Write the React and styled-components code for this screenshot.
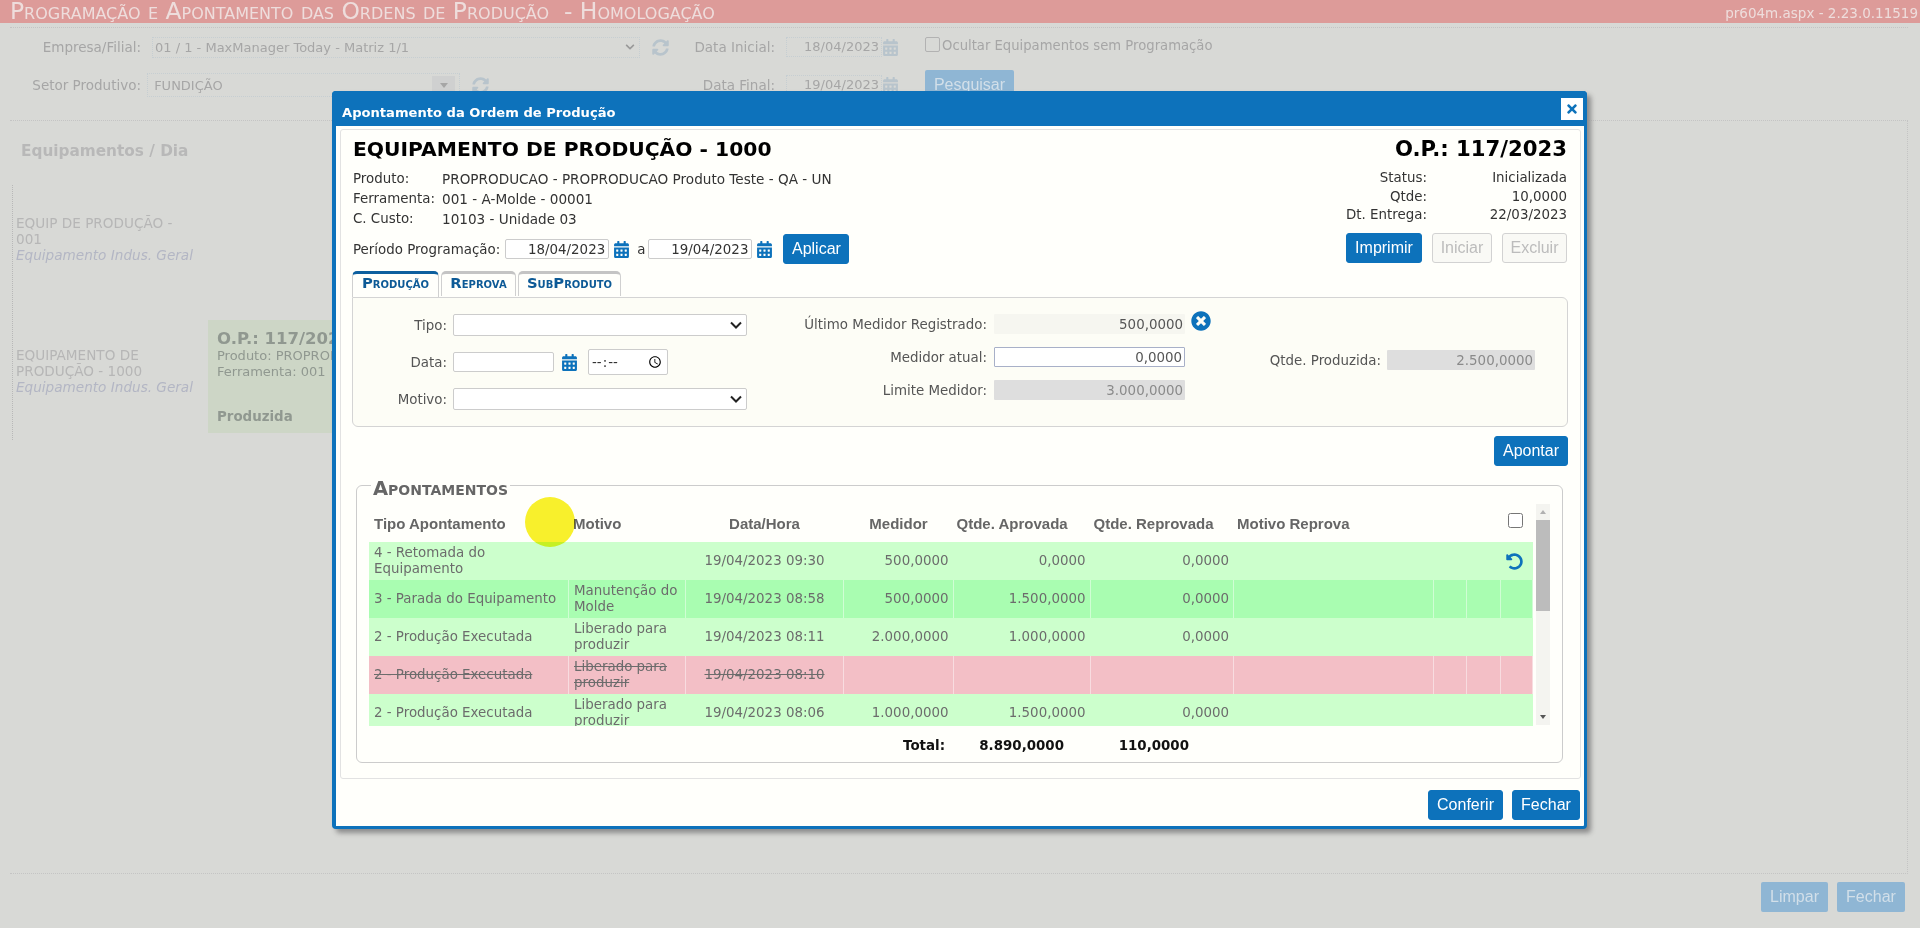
import React from "react";
import styled, { createGlobalStyle } from "styled-components";
import { FaCalendarAlt, FaChevronDown, FaSyncAlt, FaTimes, FaTimesCircle, FaUndoAlt } from "react-icons/fa";

const GlobalStyle = createGlobalStyle`
  html, body {
    margin: 0;
    height: 928px;
    overflow: hidden;
    background: #d8d9d6;
    font-family: "DejaVu Sans", Verdana, sans-serif;
    font-size: 13.4px;
  }
  * { box-sizing: border-box; }
`;

const Page = styled.div`
  position: relative;
  display: flex;
  flex-direction: column;
  width: 1920px;
  height: 928px;
  overflow: hidden;
`;

/* tela de fundo, atras do modal */
const TopBar = styled.div`
  display: flex;
  justify-content: space-between;
  align-items: center;
  flex: none;
  height: 23px;
  padding: 0 2px 0 10px;
  background: #dd9b99;
  color: #eedddc;
`;

const PageTitle = styled.div`
  font-variant: small-caps;
  font-size: 23.4px;
  line-height: 23px;
`;

const Version = styled.div`
  font-size: 13.5px;
  padding-top: 2px;
`;

const FilterBox = styled.div`
  display: grid;
  flex: none;
  grid-template-columns: 131px 534px 100px 107px 43px 1fr;
  grid-template-rows: 38px 38px;
  align-items: center;
  height: 93px;
  margin: 4px 12px 0 10px;
  border-top: 1px dotted #c4c4c4;
  color: #a6a6a6;
  font-size: 13.5px;
`;

const FilterLabel = styled.div`
  text-align: right;
`;

const FilterControl = styled.div`
  display: flex;
  align-items: center;
  color: #b8c4cc;
  font-size: 17px;
`;

const BackSelect = styled.div`
  display: flex;
  justify-content: space-between;
  align-items: center;
  width: ${(p) => p.$width}px;
  height: ${(p) => p.$height}px;
  margin: 0 12px 0 ${(p) => p.$left}px;
  padding: 0 4px 0 2px;
  border: 1px dotted #c6ced2;
  color: #a6a6a6;
  font-size: 13px;

  svg {
    color: #999;
    font-size: 10px;
  }
`;

const BackDropdown = styled.span`
  display: flex;
  justify-content: center;
  align-items: center;
  width: 23px;
  height: 19px;
  background: #cfd0d0;

  &::after {
    content: "";
    border-left: 4px solid transparent;
    border-right: 4px solid transparent;
    border-top: 5px solid #a6a6a6;
  }
`;

const BackInput = styled.div`
  width: 96px;
  height: 20px;
  margin-left: 11px;
  padding-right: 2px;
  border: 1px dotted #c6ced2;
  color: #a6a6a6;
  text-align: right;
  line-height: 18px;
  font-size: 13px;
`;

const BackCheck = styled.span`
  display: inline-block;
  width: 15px;
  height: 15px;
  margin-right: 2px;
  border: 1px solid #b2b2b2;
  border-radius: 2px;
  vertical-align: -2px;
`;

const BackOption = styled.div`
  margin-top: -4px;
  font-size: 13.2px;
`;

const BackButton = styled.div`
  display: flex;
  justify-content: center;
  align-items: center;
  width: ${(p) => p.$width}px;
  height: 30px;
  border-radius: 2px;
  background: #8fb6d4;
  color: #d2dfe9;
  font-family: "Liberation Sans", Arial, sans-serif;
  font-size: 16px;
`;

const MainPanel = styled.div`
  flex: 1;
  margin: 0 12px 0 10px;
  padding-left: 2px;
  border-top: 1px dotted #c4c4c4;
  border-bottom: 1px dotted #c4c4c4;
  border-right: 1px dotted #c4c4c4;
  color: #b2b2b2;
`;

const PanelHeading = styled.div`
  height: 64px;
  padding: 20px 0 0 9px;
  font-size: 15.3px;
  font-weight: 700;
  line-height: 20px;
  color: #b8b8b8;
`;

const EquipList = styled.div`
  height: 255px;
  border-left: 1px dotted #b8b8b8;
`;

const EquipRow = styled.div`
  display: flex;
  height: ${(p) => p.$height}px;
`;

const EquipName = styled.div`
  width: 195px;
  padding: ${(p) => p.$top}px 16px 0 3px;
  font-size: 13.6px;
  line-height: 16px;
  color: #b6b6b6;

  em {
    display: block;
    white-space: nowrap;
    color: #b3b6c4;
  }
`;

const OrderCard = styled.div`
  width: 200px;
  height: 113px;
  padding: 9px 9px;
  background: #cdd6c6;
  color: #909890;
  font-size: 13px;
  line-height: 16px;
  white-space: nowrap;
  overflow: hidden;
`;

const CardTitle = styled.div`
  font-size: 16.5px;
  font-weight: 700;
  line-height: 19px;
`;

const CardStatus = styled.div`
  margin-top: 29px;
  font-size: 13.4px;
  font-weight: 700;
`;

const BottomBar = styled.div`
  display: flex;
  flex: none;
  justify-content: flex-end;
  gap: 9px;
  height: 54px;
  padding: 8px 15px 0 0;
`;

const CursorMark = styled.div`
  position: absolute;
  left: 525px;
  top: 497px;
  width: 50px;
  height: 50px;
  border-radius: 50%;
  background: #f8f02c;
  mix-blend-mode: multiply;
  z-index: 5;
`;

/* modal */
const Modal = styled.div`
  position: absolute;
  left: 332px;
  top: 91px;
  display: flex;
  flex-direction: column;
  width: 1255px;
  height: 738px;
  border: solid #0d72bb;
  border-width: 0 3px 3px 4px;
  border-radius: 4px;
  background: #fffffb;
  box-shadow: 4px 4px 5px #8c8c8c;
`;

const ModalHead = styled.div`
  display: flex;
  justify-content: space-between;
  align-items: center;
  flex: none;
  height: 35px;
  margin: 0 -3px 0 -4px;
  padding: 7px 4px 0 10px;
  border-radius: 4px 4px 0 0;
  background: #0d72bb;
  color: #fff;
  font-size: 13.1px;
  font-weight: 700;
`;

const CloseButton = styled.button`
  display: flex;
  justify-content: center;
  align-items: center;
  width: 22px;
  height: 22px;
  margin-top: -7px;
  padding: 0;
  border: 0;
  background: #fff;
  color: #0d72bb;
  font-size: 14px;
`;

const ModalBody = styled.div`
  display: flex;
  flex-direction: column;
  height: 650px;
  margin: 3px 3px 0 4px;
  padding: 7px 13px 0 12px;
  border: 1px solid #e2e2e2;
  border-radius: 3px;
  color: #333;
`;

const SummaryRow = styled.div`
  display: flex;
  justify-content: space-between;
`;

const BigTitle = styled.div`
  font-size: 20.3px;
  font-weight: 700;
  line-height: 24px;
  color: #000;
`;

const OrderTitle = styled(BigTitle)`
  font-size: 21.2px;
`;

const InfoList = styled.div`
  margin-top: 8px;
`;

const InfoRow = styled.div`
  display: grid;
  grid-template-columns: 89px 1fr;
  line-height: 20px;
`;

const InfoValue = styled.span`
  font-size: 13.6px;
`;

const PeriodRow = styled.div`
  display: flex;
  align-items: center;
  height: 30px;
  margin-top: 5px;
`;

const DateInput = styled.input`
  width: ${(p) => p.$width || 104}px;
  height: 20px;
  margin-left: ${(p) => p.$left || 0}px;
  padding: 0 3px 0 0;
  border: 1px solid #ccc;
  border-radius: 2px;
  background: #fff;
  color: #333;
  font: inherit;
  text-align: right;
`;

const CalendarIcon = styled(FaCalendarAlt)`
  flex: none;
  margin-left: ${(p) => p.$left || 4}px;
  color: #0d72bb;
  font-size: 17px;
`;

const RangeWord = styled.span`
  margin: 0 3px 0 7px;
`;

const ActionButton = styled.button`
  height: 30px;
  width: ${(p) => p.$width}px;
  margin-left: ${(p) => p.$left || 0}px;
  padding: 0;
  border: 1px solid ${(p) => (p.disabled ? "#d2d2d2" : "#0d72bb")};
  border-radius: 3px;
  background: ${(p) => (p.disabled ? "#f9f9f5" : "#0d72bb")};
  color: ${(p) => (p.disabled ? "#bcbcbc" : "#fff")};
  font-family: "Liberation Sans", Arial, sans-serif;
  font-size: 16px;
`;

const OrderSide = styled.div`
  display: flex;
  flex-direction: column;
  align-items: flex-end;
`;

const StatusList = styled.div`
  width: 222px;
  margin-top: 8px;
`;

const StatusRow = styled.div`
  display: grid;
  grid-template-columns: 82px 1fr;
  line-height: 18.5px;

  span:last-child {
    text-align: right;
  }
  span:first-child {
    text-align: right;
    white-space: nowrap;
  }
`;

const OrderActions = styled.div`
  display: flex;
  margin-top: 8px;
`;

const TabBar = styled.div`
  display: flex;
  gap: 2px;
  height: 26px;
  margin: 7px 0 0 -1px;
`;

const Tab = styled.div`
  position: relative;
  z-index: 1;
  width: ${(p) => p.$width}px;
  height: ${(p) => (p.$active ? 26 : 25)}px;
  padding-top: 1px;
  border: 1px solid #d0d0d0;
  border-top: 3px solid ${(p) => (p.$active ? "#0d5f9e" : "#c4c4c4")};
  border-bottom: 0;
  border-radius: 5px 5px 0 0;
  background: #fffffb;
  color: #0d5a96;
  font-size: 14.8px;
  font-variant: small-caps;
  font-weight: 700;
  text-align: center;
  line-height: 15px;
`;

const TabPanel = styled.div`
  display: flex;
  height: 130px;
  margin: 0 -1px 0 -1px;
  padding-top: 16px;
  border: 1px solid #d4d4d4;
  border-radius: 0 6px 6px 6px;
  background: #fdfdf6;
`;

const FieldColumn = styled.div`
  display: flex;
  flex-direction: column;
  flex: none;
  width: ${(p) => p.$width}px;
  gap: ${(p) => p.$gap || 0}px;
  padding-top: ${(p) => p.$top || 0}px;
`;

const FieldRow = styled.div`
  display: grid;
  grid-template-columns: ${(p) => p.$labelWidth}px auto;
  justify-content: start;
  align-items: center;
  column-gap: ${(p) => p.$gap}px;
  color: #555;
`;

const FieldLabel = styled.label`
  text-align: right;
  white-space: nowrap;
`;

const FieldSelect = styled.select`
  width: 294px;
  height: 22px;
  border: 1px solid #ccc;
  border-radius: 2px;
  appearance: none;
  background: #fff url("data:image/svg+xml,%3Csvg xmlns='http://www.w3.org/2000/svg' width='12' height='8' viewBox='0 0 12 8'%3E%3Cpath d='M1 1.5l5 5 5-5' fill='none' stroke='%23222' stroke-width='2'/%3E%3C/svg%3E") no-repeat right 4px center;
  color: #333;
`;

const InlineControls = styled.div`
  display: flex;
  align-items: center;
`;

const TimeInput = styled.input`
  width: 80px;
  height: 26px;
  margin-left: 10px;
  padding: 0 2px;
  border: 1px solid #ccc;
  border-radius: 2px;
  background: #fff;
  color: #333;
  font: inherit;

  &::-webkit-datetime-edit-ampm-field {
    display: none;
  }
`;

const ValueInput = styled.input`
  width: ${(p) => p.$width}px;
  height: 20px;
  padding: 0 2px;
  border: ${(p) => (p.$editable ? "1px solid #a8b0c8" : "0")};
  border-radius: 1px;
  background: ${(p) => (p.$muted ? "#dedede" : p.$editable ? "#fff" : "#f6f6f0")};
  color: ${(p) => (p.$muted ? "#8a8a8a" : "#555")};
  font: inherit;
  text-align: right;
`;

const ClearIcon = styled(FaTimesCircle)`
  position: absolute;
  left: 197px;
  top: -3px;
  color: #0d72bb;
  font-size: 20px;
`;

const FieldWithAction = styled.div`
  position: relative;
`;

const ApontarRow = styled.div`
  display: flex;
  justify-content: flex-end;
  margin: 9px -1px 0 0;
`;

const EntriesBox = styled.fieldset`
  position: relative;
  height: 287.5px;
  margin: 9.5px 4px 0 3px;
  padding: 0 0 0 12px;
  border: 1px solid #ccc;
  border-radius: 6px;
  min-width: 0;
`;

const EntriesLegend = styled.legend`
  margin-left: 2px;
  padding: 6px 2px 0 2px;
  color: #666;
  font-size: 19.5px;
  font-variant: small-caps;
  font-weight: 700;
  line-height: 14px;
`;

const TableArea = styled.div`
  display: flex;
  height: 222px;
  margin-top: 8.5px;
`;

const TableColumn = styled.div`
  width: 1164px;
  overflow: hidden;
`;

const gridColumns = "200px 116.5px 158px 110px 137px 143.5px 200px 32.5px 34px 32px";

const HeadRow = styled.div`
  position: relative;
  display: grid;
  grid-template-columns: ${gridColumns};
  align-items: center;
  height: 38px;
  padding-top: 1px;
  color: #666;
  font-family: "Liberation Sans", Arial, sans-serif;
  font-size: 15px;
  font-weight: 700;
`;

const HeadCell = styled.div`
  padding: 0 ${(p) => p.$pad ?? 3}px;
  text-align: ${(p) => p.$align || "left"};
`;

const MasterCheck = styled.input`
  position: absolute;
  left: 1139px;
  top: 9px;
  width: 15px;
  height: 15px;
  margin: 0;
`;

const tones = {
  ok: "#ccffcc",
  stop: "#a9fdb1",
  gone: "#f3bfc6",
};

const DataRow = styled.div`
  display: grid;
  grid-template-columns: ${gridColumns};
  height: 38px;
  background: ${(p) => tones[p.$tone]};
  color: #6c6c6c;
  font-size: 13.4px;
  line-height: 16px;
  text-decoration: ${(p) => (p.$tone === "gone" ? "line-through" : "none")};
`;

const DataCell = styled.div`
  display: flex;
  align-items: center;
  justify-content: ${(p) => p.$justify || "flex-start"};
  padding: 0 4px 0 5px;
  border-right: 1px solid ${(p) => (p.$tone === "ok" ? "transparent" : "rgba(255, 255, 255, 0.45)")};
  color: ${(p) => (p.$icon ? "#0d72bb" : "inherit")};
  font-size: ${(p) => (p.$icon ? 17 : 13.4)}px;
`;

const Scrollbar = styled.div`
  display: flex;
  flex-direction: column;
  align-items: center;
  width: 14px;
  height: 221px;
  margin-left: 3px;
  background: #f4f4f0;
`;

const ScrollArrow = styled.div`
  flex: none;
  width: 0;
  height: 0;
  margin: 6px 0;
  border-left: 3.5px solid transparent;
  border-right: 3.5px solid transparent;
  border-${(p) => (p.$up ? "bottom" : "top")}: 4px solid ${(p) => (p.$up ? "#b0b0b0" : "#555")};
`;

const ScrollThumb = styled.div`
  flex: none;
  width: 14px;
  height: 91px;
  background: #bcbcbc;
`;

const ScrollRest = styled.div`
  flex: 1;
`;

const TotalRow = styled.div`
  display: grid;
  grid-template-columns: 576px 119px 125px;
  align-items: center;
  height: 39px;
  color: #111;
  font-weight: 700;
  text-align: right;
`;

const Footer = styled.div`
  display: flex;
  justify-content: flex-end;
  gap: 9px;
  padding: 11px 4px 0 0;
`;

const rows = [
  { tone: "ok", tipo: "4 - Retomada do Equipamento", motivo: "", data: "19/04/2023 09:30", medidor: "500,0000", aprovada: "0,0000", reprovada: "0,0000", undo: true },
  { tone: "stop", tipo: "3 - Parada do Equipamento", motivo: "Manutenção do Molde", data: "19/04/2023 08:58", medidor: "500,0000", aprovada: "1.500,0000", reprovada: "0,0000" },
  { tone: "ok", tipo: "2 - Produção Executada", motivo: "Liberado para produzir", data: "19/04/2023 08:11", medidor: "2.000,0000", aprovada: "1.000,0000", reprovada: "0,0000" },
  { tone: "gone", tipo: "2 - Produção Executada", motivo: "Liberado para produzir", data: "19/04/2023 08:10", medidor: "", aprovada: "", reprovada: "" },
  { tone: "ok", tipo: "2 - Produção Executada", motivo: "Liberado para produzir", data: "19/04/2023 08:06", medidor: "1.000,0000", aprovada: "1.500,0000", reprovada: "0,0000" },
];

function BackgroundScreen() {
  return (
    <>
      <TopBar>
        <PageTitle>Programação e Apontamento das Ordens de Produção &nbsp;- Homologação</PageTitle>
        <Version>pr604m.aspx - 2.23.0.11519</Version>
      </TopBar>
      <FilterBox>
        <FilterLabel>Empresa/Filial:</FilterLabel>
        <FilterControl>
          <BackSelect $width={488} $height={21} $left={11}>
            <span>01 / 1 - MaxManager Today - Matriz 1/1</span>
            <FaChevronDown />
          </BackSelect>
          <FaSyncAlt />
        </FilterControl>
        <FilterLabel>Data Inicial:</FilterLabel>
        <BackInput>18/04/2023</BackInput>
        <FilterControl>
          <FaCalendarAlt />
        </FilterControl>
        <BackOption>
          <BackCheck />
          Ocultar Equipamentos sem Programação
        </BackOption>
        <FilterLabel>Setor Produtivo:</FilterLabel>
        <FilterControl>
          <BackSelect $width={313} $height={24} $left={6}>
            <span>&nbsp;FUNDIÇÃO</span>
            <BackDropdown />
          </BackSelect>
          <FaSyncAlt />
        </FilterControl>
        <FilterLabel>Data Final:</FilterLabel>
        <BackInput>19/04/2023</BackInput>
        <FilterControl>
          <FaCalendarAlt />
        </FilterControl>
        <BackButton $width={89}>Pesquisar</BackButton>
      </FilterBox>
      <MainPanel>
        <PanelHeading>Equipamentos / Dia</PanelHeading>
        <EquipList>
          <EquipRow $height={135}>
            <EquipName $top={30}>
              EQUIP DE PRODUÇÃO - 001
              <em>Equipamento Indus. Geral</em>
            </EquipName>
          </EquipRow>
          <EquipRow $height={113}>
            <EquipName $top={27}>
              EQUIPAMENTO DE PRODUÇÃO - 1000
              <em>Equipamento Indus. Geral</em>
            </EquipName>
            <OrderCard>
              <CardTitle>O.P.: 117/2023</CardTitle>
              <div>Produto: PROPRODUCAO</div>
              <div>Ferramenta: 001</div>
              <CardStatus>Produzida</CardStatus>
            </OrderCard>
          </EquipRow>
        </EquipList>
      </MainPanel>
      <BottomBar>
        <BackButton $width={67}>Limpar</BackButton>
        <BackButton $width={68}>Fechar</BackButton>
      </BottomBar>
    </>
  );
}

function EntriesTable() {
  return (
    <EntriesBox>
      <EntriesLegend>Apontamentos</EntriesLegend>
      <TableArea>
        <TableColumn>
          <HeadRow>
            <HeadCell $pad={5}>Tipo Apontamento</HeadCell>
            <HeadCell $pad={4}>Motivo</HeadCell>
            <HeadCell $align="center">Data/Hora</HeadCell>
            <HeadCell $align="center">Medidor</HeadCell>
            <HeadCell>Qtde. Aprovada</HeadCell>
            <HeadCell>Qtde. Reprovada</HeadCell>
            <HeadCell>Motivo Reprova</HeadCell>
            <MasterCheck type="checkbox" />
          </HeadRow>
          {rows.map((row) => (
            <DataRow key={row.data} $tone={row.tone}>
              <DataCell $tone={row.tone}>{row.tipo}</DataCell>
              <DataCell $tone={row.tone}>{row.motivo}</DataCell>
              <DataCell $tone={row.tone} $justify="center">{row.data}</DataCell>
              <DataCell $tone={row.tone} $justify="flex-end">{row.medidor}</DataCell>
              <DataCell $tone={row.tone} $justify="flex-end">{row.aprovada}</DataCell>
              <DataCell $tone={row.tone} $justify="flex-end">{row.reprovada}</DataCell>
              <DataCell $tone={row.tone} />
              <DataCell $tone={row.tone} />
              <DataCell $tone={row.tone} />
              <DataCell $tone={row.tone} $icon>{row.undo && <FaUndoAlt />}</DataCell>
            </DataRow>
          ))}
        </TableColumn>
        <Scrollbar>
          <ScrollArrow $up />
          <ScrollThumb />
          <ScrollRest />
          <ScrollArrow />
        </Scrollbar>
      </TableArea>
      <TotalRow>
        <span>Total:</span>
        <span>8.890,0000</span>
        <span>110,0000</span>
      </TotalRow>
    </EntriesBox>
  );
}

function App() {
  return (
    <Page>
      <GlobalStyle />
      <BackgroundScreen />
      <Modal>
        <ModalHead>
          Apontamento da Ordem de Produção
          <CloseButton><FaTimes /></CloseButton>
        </ModalHead>
        <ModalBody>
          <SummaryRow>
            <div>
              <BigTitle>EQUIPAMENTO DE PRODUÇÃO - 1000</BigTitle>
              <InfoList>
                <InfoRow><span>Produto:</span><InfoValue>PROPRODUCAO - PROPRODUCAO Produto Teste - QA - UN</InfoValue></InfoRow>
                <InfoRow><span>Ferramenta:</span><InfoValue>001 - A-Molde - 00001</InfoValue></InfoRow>
                <InfoRow><span>C. Custo:</span><InfoValue>10103 - Unidade 03</InfoValue></InfoRow>
              </InfoList>
              <PeriodRow>
                Período Programação:
                <DateInput $left={5} readOnly defaultValue="18/04/2023" />
                <CalendarIcon />
                <RangeWord>a</RangeWord>
                <DateInput readOnly defaultValue="19/04/2023" />
                <CalendarIcon />
                <ActionButton $width={66} $left={10}>Aplicar</ActionButton>
              </PeriodRow>
            </div>
            <OrderSide>
              <OrderTitle>O.P.: 117/2023</OrderTitle>
              <StatusList>
                <StatusRow><span>Status:</span><span>Inicializada</span></StatusRow>
                <StatusRow><span>Qtde:</span><span>10,0000</span></StatusRow>
                <StatusRow><span>Dt. Entrega:</span><span>22/03/2023</span></StatusRow>
              </StatusList>
              <OrderActions>
                <ActionButton $width={76}>Imprimir</ActionButton>
                <ActionButton $width={60} $left={10} disabled>Iniciar</ActionButton>
                <ActionButton $width={65} $left={10} disabled>Excluir</ActionButton>
              </OrderActions>
            </OrderSide>
          </SummaryRow>
          <TabBar>
            <Tab $width={87} $active>Produção</Tab>
            <Tab $width={75}>Reprova</Tab>
            <Tab $width={103}>SubProduto</Tab>
          </TabBar>
          <TabPanel>
            <FieldColumn $width={394} $gap={13}>
              <FieldRow $labelWidth={94} $gap={6}>
                <FieldLabel>Tipo:</FieldLabel>
                <FieldSelect />
              </FieldRow>
              <FieldRow $labelWidth={94} $gap={6}>
                <FieldLabel>Data:</FieldLabel>
                <InlineControls>
                  <DateInput $width={101} />
                  <CalendarIcon $left={7} />
                  <TimeInput type="time" />
                </InlineControls>
              </FieldRow>
              <FieldRow $labelWidth={94} $gap={6}>
                <FieldLabel>Motivo:</FieldLabel>
                <FieldSelect />
              </FieldRow>
            </FieldColumn>
            <FieldColumn $width={465} $gap={13}>
              <FieldRow $labelWidth={240} $gap={7}>
                <FieldLabel>Último Medidor Registrado:</FieldLabel>
                <FieldWithAction>
                  <ValueInput $width={191} readOnly defaultValue="500,0000" />
                  <ClearIcon />
                </FieldWithAction>
              </FieldRow>
              <FieldRow $labelWidth={240} $gap={7}>
                <FieldLabel>Medidor atual:</FieldLabel>
                <ValueInput $width={191} $editable defaultValue="0,0000" />
              </FieldRow>
              <FieldRow $labelWidth={240} $gap={7}>
                <FieldLabel>Limite Medidor:</FieldLabel>
                <ValueInput $width={191} $muted readOnly defaultValue="3.000,0000" />
              </FieldRow>
            </FieldColumn>
            <FieldColumn $width={330} $top={36}>
              <FieldRow $labelWidth={169} $gap={6}>
                <FieldLabel>Qtde. Produzida:</FieldLabel>
                <ValueInput $width={148} $muted readOnly defaultValue="2.500,0000" />
              </FieldRow>
            </FieldColumn>
          </TabPanel>
          <ApontarRow>
            <ActionButton $width={74}>Apontar</ActionButton>
          </ApontarRow>
          <EntriesTable />
        </ModalBody>
        <Footer>
          <ActionButton $width={75}>Conferir</ActionButton>
          <ActionButton $width={68}>Fechar</ActionButton>
        </Footer>
      </Modal>
      <CursorMark />
    </Page>
  );
}

export default App;
